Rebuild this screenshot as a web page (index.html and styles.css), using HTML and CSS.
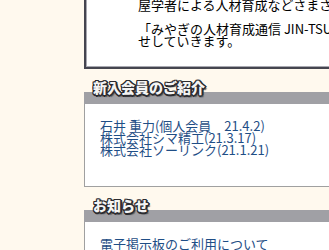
FILE: index.html
```html
<!DOCTYPE html>
<html lang="ja">
<head>
    <meta charset="UTF-8">
    <title>みやぎの人材育成</title>
    <link rel="stylesheet" href="styles.css">
</head>
<body>

    <div id="page">
        <div id="side"></div>

        <div id="main">
            <div class="notice-box">
                <p><span class="line">屋学者による人材育成などさまざま</span></p>
                <p>
                    <span class="line">「みやぎの人材育成通信 JIN-TSU</span>
                    <span class="line">せしていきます。</span>
                </p>
            </div>

            <h2 class="sec-title">新入会員のご紹介</h2>
            <div class="sec-box">
                <a class="line" href="#">石井 重力(個人会員　21.4.2)</a>
                <a class="line" href="#">株式会社シマ精工(21.3.17)</a>
                <a class="line" href="#">株式会社ソーリンク(21.1.21)</a>
            </div>

            <h2 class="sec-title">お知らせ</h2>
            <div class="sec-box">
                <a class="line" href="#">電子掲示板のご利用について</a>
            </div>
        </div>
    </div>

</body>
</html>
```

FILE: styles.css
```css
body {
    margin: 0;
    background-color: #fff9ee;
    color: black;
    font-family: 'Noto Sans CJK JP', 'DejaVu Sans', sans-serif;
    font-size: 13px;
    line-height: 12px;
    overflow: hidden;
}
a {
    color: #1f4e86;
    text-decoration: none;
}
.line {
    display: block;
    height: 12px;
    white-space: nowrap;
}
#page {
    display: flex;
}
#side {
    width: 84px;
    flex-shrink: 0;
}
#main {
    width: 420px;
    flex-shrink: 0;
    margin-top: -20px;
}
.notice-box {
    background-color: white;
    border: 2px solid #45454f;
    box-shadow: inset 0 0 0 1px #a8a8b0;
    padding: 17px 20px 20px 52px;
}
.notice-box>p {
    margin: 0;
}
.notice-box>p+p {
    margin-top: 12px;
}
.sec-title {
    margin: 12px 0 0 0;
    height: 23px;
    padding-left: 9px;
    font-size: 14px;
    line-height: 13px;
    font-weight: 900;
    color: #f4f4f4;
    background: linear-gradient(to bottom, transparent 11px, #a0a0a5 11px);
    text-shadow: 1px 0 0 #2b2b30, -1px 0 0 #2b2b30, 0 1px 0 #2b2b30, 0 -1px 0 #2b2b30,
                 1px 1px 0 #2b2b30, -1px -1px 0 #2b2b30, 1px -1px 0 #2b2b30, -1px 1px 0 #2b2b30,
                 2px 0 0 #2b2b30, 0 2px 0 #2b2b30, 2px 2px 1px #555;
}
.sec-box {
    background-color: white;
    border: 1px solid #a0a0a0;
    border-top: none;
    padding: 16px 15px 30px 15px;
}
```
